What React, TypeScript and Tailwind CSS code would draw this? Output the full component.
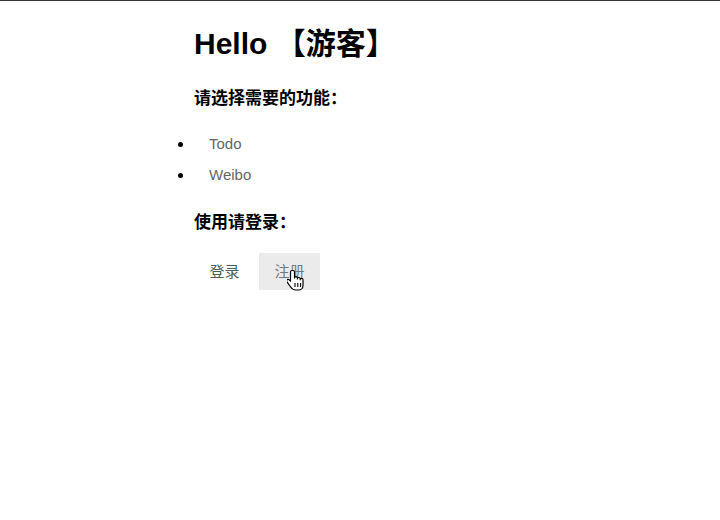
import React, { FC } from "react";

const font = {
  fontFamily: '"Liberation Sans", Arial, "Noto Sans CJK SC", sans-serif',
};

const HandCursor: FC = () => (
  <svg
    width="18"
    height="22"
    viewBox="0 0 18 22"
    className="absolute left-[28px] top-[16px]"
  >
    <path
      d="M5 1.5c-.9 0-1.5.7-1.5 1.5v9.2l-1.2-1.3c-.7-.7-1.8-.7-2.3 0-.5.6-.4 1.4 0 2l3.3 4.6c1 1.5 2.5 3.5 5.2 3.5h3c2.6 0 4.5-2 4.5-4.6v-5.6c0-.8-.6-1.4-1.4-1.4-.8 0-1.4.6-1.4 1.4v-.9c0-.8-.6-1.4-1.4-1.4-.8 0-1.4.6-1.4 1.4v-.8c0-.8-.6-1.4-1.4-1.4-.8 0-1.5.6-1.5 1.4V3c0-.8-.6-1.5-1.5-1.5z"
      fill="#fff"
      stroke="#000"
      strokeWidth="1.2"
      strokeLinejoin="round"
    />
    <path d="M8 14v4M10.8 14v4M13.6 14v4" stroke="#000" strokeWidth="1.1" />
  </svg>
);

const App: FC = () => {
  return (
    <div className="min-h-[520px] bg-white border-t border-[#333]" style={font}>
      <div className="pl-[194px] pt-[25px]">
        <h1 className="text-[30px] font-bold leading-[36px] text-black">
          Hello 【游客】
        </h1>
        <h3 className="mt-[25px] text-[17px] font-bold leading-[24px] text-black">
          请选择需要的功能：
        </h3>
        <ul className="mt-[23px] list-disc list-outside text-[15px] text-[#666] marker:text-black">
          <li className="pl-[15px] leading-[20px]">Todo</li>
          <li className="pl-[15px] leading-[20px] mt-[11px]">Weibo</li>
        </ul>
        <h3 className="mt-[26px] text-[17px] font-bold leading-[24px] text-black">
          使用请登录：
        </h3>
        <div className="mt-[18px] flex gap-[4px]">
          <button className="w-[61px] h-[37px] pt-[2px] text-[15px] text-[#4a5e57]">
            登录
          </button>
          <button className="relative w-[61px] h-[37px] pt-[2px] text-[15px] text-[#777] bg-[#ebebeb]">
            注册
            <HandCursor />
          </button>
        </div>
      </div>
    </div>
  );
};

export default App;
